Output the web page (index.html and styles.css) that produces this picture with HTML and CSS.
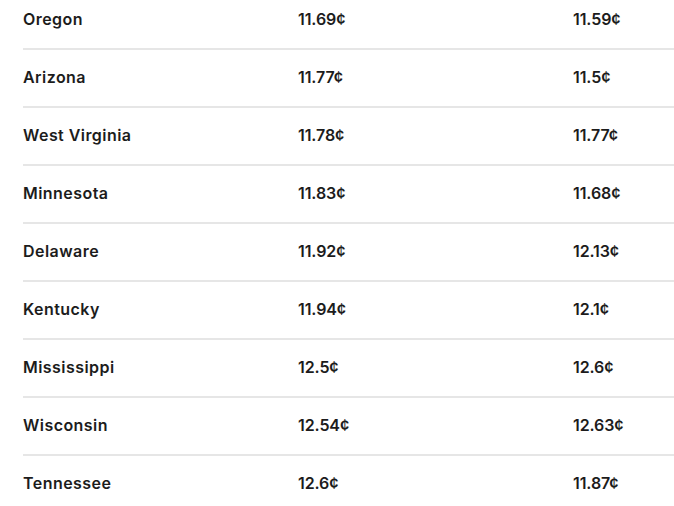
FILE: index.html
```html
<!DOCTYPE html>
<html>
<head>
<meta charset="utf-8">
<link rel="stylesheet" href="styles.css">
</head>
<body>
<table class="rates">
<tbody>
<tr><td class="state">Oregon</td><td>11.69¢</td><td>11.59¢</td></tr>
<tr><td class="state">Arizona</td><td>11.77¢</td><td>11.5¢</td></tr>
<tr><td class="state">West Virginia</td><td>11.78¢</td><td>11.77¢</td></tr>
<tr><td class="state">Minnesota</td><td>11.83¢</td><td>11.68¢</td></tr>
<tr><td class="state">Delaware</td><td>11.92¢</td><td>12.13¢</td></tr>
<tr><td class="state">Kentucky</td><td>11.94¢</td><td>12.1¢</td></tr>
<tr><td class="state">Mississippi</td><td>12.5¢</td><td>12.6¢</td></tr>
<tr><td class="state">Wisconsin</td><td>12.54¢</td><td>12.63¢</td></tr>
<tr><td class="state">Tennessee</td><td>12.6¢</td><td>11.87¢</td></tr>
</tbody>
</table>
</body>
</html>
```
FILE: styles.css
```css
html, body {
  margin: 0;
  padding: 0;
  background: #fff;
  overflow: hidden;
}
.rates {
  margin: -8px 0 0 23px;
  width: 825px;
  border-collapse: collapse;
  table-layout: fixed;
  font-family: Inter, "Noto Sans", sans-serif;
  font-size: 16px;
  font-weight: 600;
  color: #1c1c1c;
}
.rates td {
  height: 54px;
  padding: 0 0 2px 0;
  vertical-align: middle;
  border-bottom: 2px solid #e6e6e6;
  width: 275px;
  letter-spacing: -0.1px;
}
.rates td.state {
  letter-spacing: 0.45px;
}
```
